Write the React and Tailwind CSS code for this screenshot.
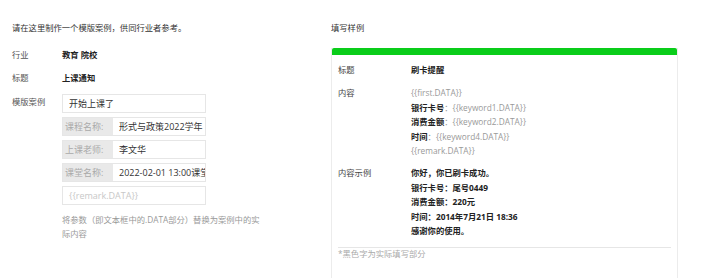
import React from 'react';

const font = { fontFamily: '"Microsoft YaHei", "Open Sans", "Noto Sans CJK SC", sans-serif' };

function Field({ label, value, placeholder }) {
  if (placeholder) {
    return (
      <div className="h-[19px] w-[144px] border border-[#e6e6e6] flex items-center px-[6px] text-[#c8c8c8] overflow-hidden whitespace-nowrap">
        {placeholder}
      </div>
    );
  }
  if (!label) {
    return (
      <div className="h-[19px] w-[144px] border border-[#e6e6e6] flex items-center px-[6px] text-[#333] overflow-hidden whitespace-nowrap">
        {value}
      </div>
    );
  }
  return (
    <div className="h-[19px] w-[144px] border border-[#e6e6e6] flex items-stretch overflow-hidden whitespace-nowrap">
      <div className="w-[50px] shrink-0 bg-[#e9e9e9] text-[#aaa] flex items-center pl-[2px]">{label}</div>
      <div className="flex items-center pl-[6px] text-[#333] overflow-hidden">{value}</div>
    </div>
  );
}

export default function App() {
  return (
    <div className="w-[708px] h-[278px] bg-white overflow-hidden flex text-[8.3px] leading-[14px] text-[#333]" style={font}>
      <div className="w-[331px] shrink-0 pl-[12px] pt-[21px]">
        <p className="text-[#333]">请在这里制作一个模版案例，供同行业者参考。</p>
        <div className="mt-[8px] flex flex-col">
          <div className="flex h-[23px] items-center">
            <span className="w-[50px] text-[#555]">行业</span>
            <span className="font-bold text-[#222]">教育 院校</span>
          </div>
          <div className="flex h-[23px] items-center">
            <span className="w-[50px] text-[#555]">标题</span>
            <span className="font-bold text-[#222]">上课通知</span>
          </div>
          <div className="flex mt-[5px]">
            <span className="w-[50px] text-[#555] pt-[1px]">模版案例</span>
            <div className="flex flex-col gap-[4px]">
              <div className="flex flex-col gap-[4px] text-[9px]">
                <Field value="开始上课了" />
                <Field label="课程名称:" value="形式与政策2022学年" />
                <Field label="上课老师:" value="李文华" />
                <Field label="课堂名称:" value="2022-02-01 13:00课堂" />
                <Field placeholder="{{remark.DATA}}" />
              </div>
              <p className="mt-[4px] w-[204px] text-[#999]">将参数（即文本框中的.DATA部分）替换为案例中的实际内容</p>
            </div>
          </div>
        </div>
      </div>
      <div className="flex-1 pt-[21px]">
        <p className="text-[#333]">填写样例</p>
        <div className="mt-[13px] w-[347px] h-[300px] border border-[#ececec] border-t-0">
          <div className="h-[7px] bg-[#0acd1a] rounded-t-[2px]" />
          <div className="px-[6px] pt-[8px]">
            <div className="flex">
              <span className="w-[73px] text-[#444]">标题</span>
              <span className="font-bold text-[#222]">刷卡提醒</span>
            </div>
            <div className="flex mt-[9px] leading-[14.6px]">
              <span className="w-[73px] text-[#444]">内容</span>
              <div className="flex flex-col">
                <span className="text-[#999]">{'{{first.DATA}}'}</span>
                <span><b className="text-[#222]">银行卡号</b><span className="text-[#999]">：{'{{keyword1.DATA}}'}</span></span>
                <span><b className="text-[#222]">消费金额</b><span className="text-[#999]">：{'{{keyword2.DATA}}'}</span></span>
                <span><b className="text-[#222]">时间</b><span className="text-[#999]">：{'{{keyword4.DATA}}'}</span></span>
                <span className="text-[#999]">{'{{remark.DATA}}'}</span>
              </div>
            </div>
            <div className="flex mt-[7px] leading-[14.6px]">
              <span className="w-[73px] text-[#444]">内容示例</span>
              <div className="flex flex-col font-bold text-[#222]">
                <span>你好，你已刷卡成功。</span>
                <span>银行卡号：尾号0449</span>
                <span>消费金额：220元</span>
                <span>时间：2014年7月21日 18:36</span>
                <span>感谢你的使用。</span>
              </div>
            </div>
            <div className="mt-[8px] border-t border-[#e6e6e6] leading-[12px] text-[#aaa]">*黑色字为实际填写部分</div>
          </div>
        </div>
      </div>
    </div>
  );
}
